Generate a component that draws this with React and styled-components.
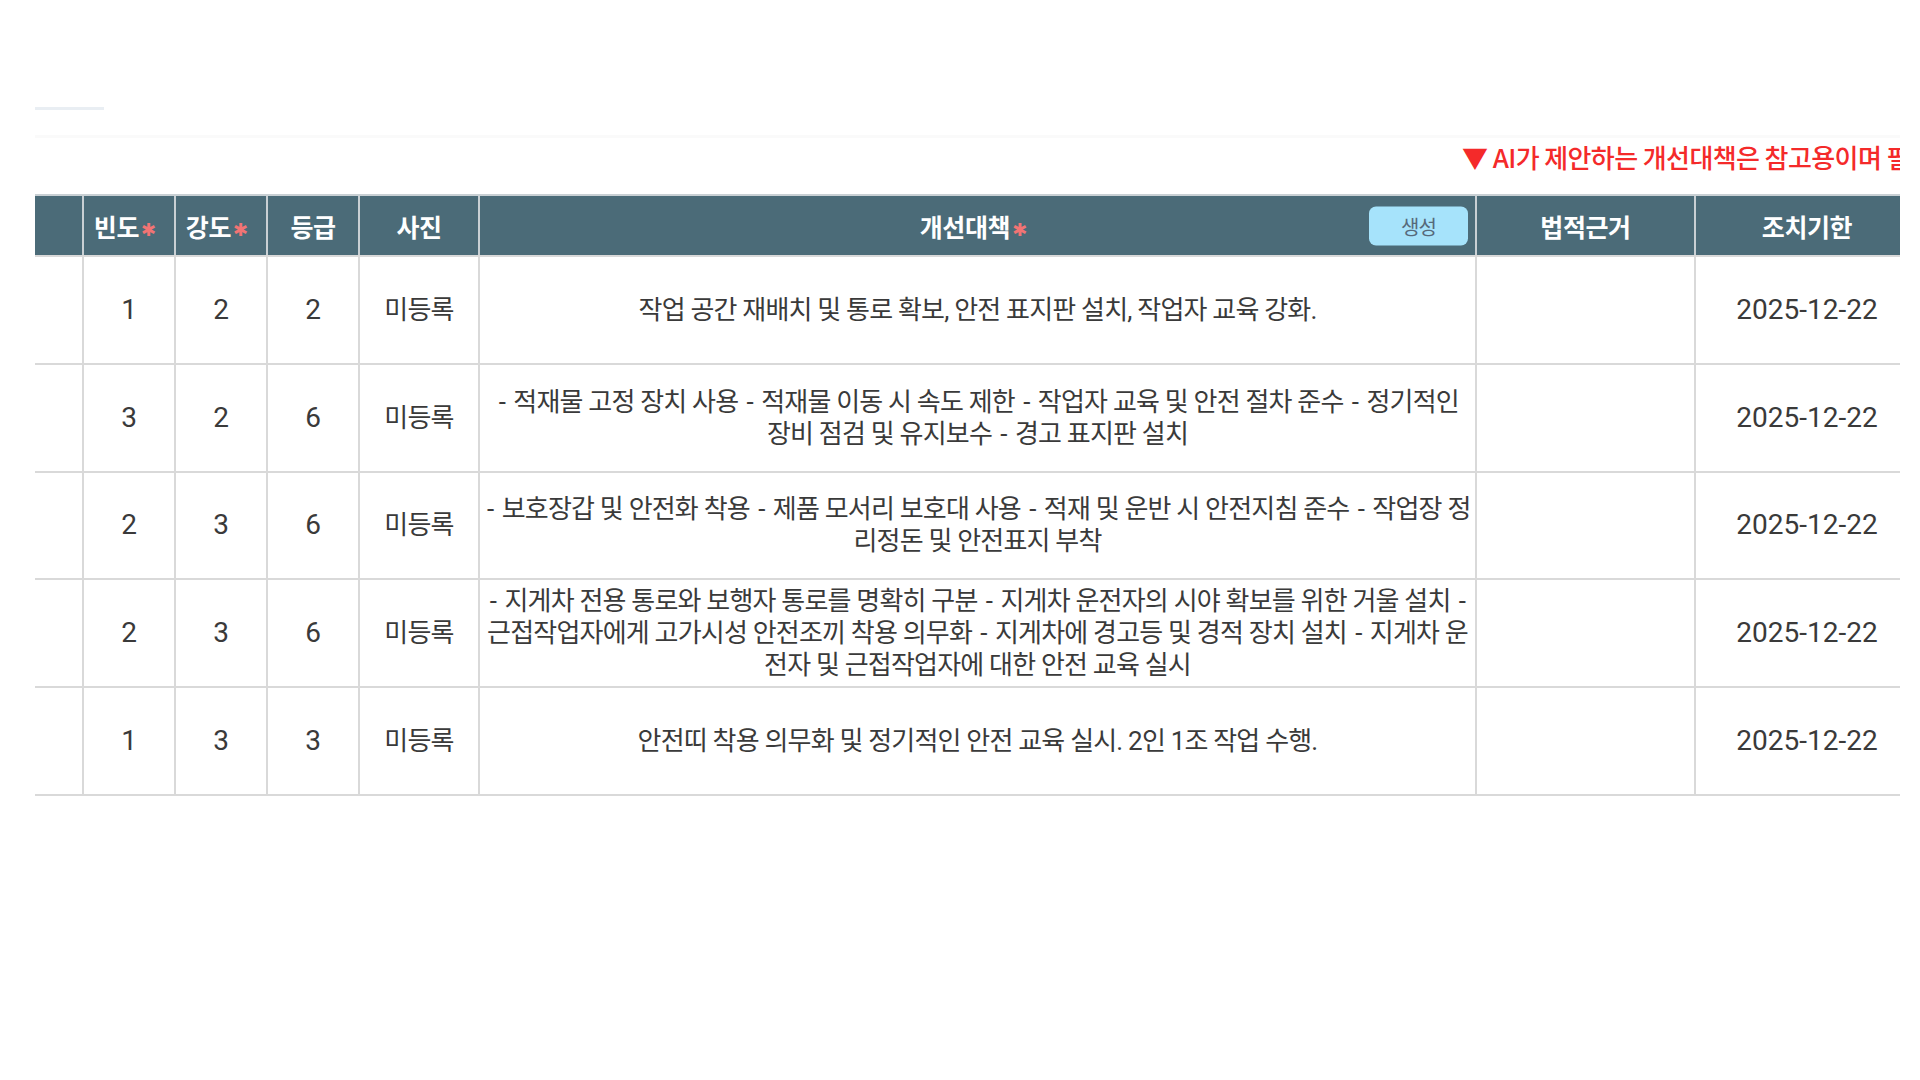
import React from 'react';
import styled, { createGlobalStyle } from 'styled-components';

const GlobalStyle = createGlobalStyle`
	html,
	body {
		margin: 0;
		padding: 0;
		background: #ffffff;
		overflow: hidden;
	}

	body {
		font-family: Roboto, 'Noto Sans CJK KR', sans-serif;
		color: #333333;
	}
`;

// 표 컬럼
const columns = [
	{ key: 'no', label: '', width: 49 },
	{ key: 'freq', label: '빈도', width: 92, required: true },
	{ key: 'sev', label: '강도', width: 92, required: true },
	{ key: 'grade', label: '등급', width: 92 },
	{ key: 'photo', label: '사진', width: 120 },
	{ key: 'measure', label: '개선대책', width: 997, required: true, action: '생성' },
	{ key: 'law', label: '법적근거', width: 219 },
	{ key: 'due', label: '조치기한', width: 224 },
];

// 개선대책은 화면에 보이는 줄 단위로 나눠둠
const rows = [
	{
		freq: 1,
		sev: 2,
		grade: 2,
		photo: '미등록',
		measure: ['작업 공간 재배치 및 통로 확보, 안전 표지판 설치, 작업자 교육 강화.'],
		law: '',
		due: '2025-12-22',
	},
	{
		freq: 3,
		sev: 2,
		grade: 6,
		photo: '미등록',
		measure: [
			'- 적재물 고정 장치 사용 - 적재물 이동 시 속도 제한 - 작업자 교육 및 안전 절차 준수 - 정기적인',
			'장비 점검 및 유지보수 - 경고 표지판 설치',
		],
		law: '',
		due: '2025-12-22',
	},
	{
		freq: 2,
		sev: 3,
		grade: 6,
		photo: '미등록',
		measure: [
			'- 보호장갑 및 안전화 착용 - 제품 모서리 보호대 사용 - 적재 및 운반 시 안전지침 준수 - 작업장 정',
			'리정돈 및 안전표지 부착',
		],
		law: '',
		due: '2025-12-22',
	},
	{
		freq: 2,
		sev: 3,
		grade: 6,
		photo: '미등록',
		measure: [
			'- 지게차 전용 통로와 보행자 통로를 명확히 구분 - 지게차 운전자의 시야 확보를 위한 거울 설치 -',
			'근접작업자에게 고가시성 안전조끼 착용 의무화 - 지게차에 경고등 및 경적 장치 설치 - 지게차 운',
			'전자 및 근접작업자에 대한 안전 교육 실시',
		],
		law: '',
		due: '2025-12-22',
	},
	{
		freq: 1,
		sev: 3,
		grade: 3,
		photo: '미등록',
		measure: ['안전띠 착용 의무화 및 정기적인 안전 교육 실시. 2인 1조 작업 수행.'],
		law: '',
		due: '2025-12-22',
	},
];

const Page = styled.main`
	width: 1865px;
	margin-left: 35px;
	padding-top: 107px;
	overflow: hidden;
`;

const TabLine = styled.div`
	width: 69px;
	height: 3px;
	background: #e9eef3;
`;

const Divider = styled.div`
	height: 3px;
	margin-top: 25px;
	background: #fafafa;
`;

const Notice = styled.p`
	margin: 4px 0 22px;
	padding-left: 1427px;
	white-space: nowrap;
	font-family: 'Noto Sans CJK KR', sans-serif;
	font-size: 26px;
	font-weight: 500;
	line-height: 30px;
	letter-spacing: -0.6px;
	color: #f42a2a;
`;

const Table = styled.table`
	width: 1885px;
	table-layout: fixed;
	border-collapse: separate;
	border-spacing: 0;
`;

const HeadCell = styled.th`
	position: relative;
	height: 59px;
	padding: 0;
	background: #4b6b78;
	border-top: 2px solid #c9d0d4;
	border-right: 2px solid #c9d0d4;
	color: #ffffff;
	font-family: 'Noto Sans CJK KR', sans-serif;
	font-size: 25px;
	font-weight: 700;
	letter-spacing: -0.4px;
	text-align: center;
	white-space: nowrap;
`;

const Required = styled.span`
	margin: 0 8px 0 2px;
	font-family: 'DejaVu Sans', sans-serif;
	font-size: 18px;
	font-weight: 400;
	letter-spacing: 0;
	vertical-align: 1px;
	color: #f27474;
`;

const MakeButton = styled.button`
	position: absolute;
	top: 50%;
	right: 7px;
	width: 99px;
	height: 39px;
	transform: translateY(-50%);
	border: none;
	border-radius: 7px;
	background: #a6e3fb;
	color: #56697a;
	font-family: 'Noto Sans CJK KR', sans-serif;
	font-size: 20px;
	letter-spacing: -0.8px;
	cursor: pointer;
`;

const Cell = styled.td`
	height: 105.8px;
	padding: 0 ${(p) => (p.$text ? '4px' : '0')};
	border-top: ${(p) => (p.$first ? '2px solid #d9d9d9' : 'none')};
	border-right: 2px solid #d9d9d9;
	border-bottom: 2px solid #d9d9d9;
	text-align: center;
	vertical-align: middle;
	color: #3a3a3a;
	font-size: ${(p) => (p.$text ? '26px' : '28px')};
	line-height: 32px;
	letter-spacing: ${(p) => (p.$text ? '-0.8px' : '0')};
`;

const Line = styled.span`
	display: block;
	white-space: nowrap;
`;

// 항목 구분용 하이픈은 앞뒤 간격이 조금 더 넓음
const Dash = styled.span`
	padding: 0 2.6px;
`;

const renderLine = (line) =>
	line.split('-').map((part, k) => (
		<React.Fragment key={k}>
			{k > 0 && <Dash>-</Dash>}
			{part}
		</React.Fragment>
	));

const App = () => {
	return (
		<>
			<GlobalStyle />
			<Page>
				<TabLine />
				<Divider />
				<Notice>▼ AI가 제안하는 개선대책은 참고용이며 필요시 수정하여 사용하시기 바랍니다.</Notice>
				<Table>
					<colgroup>
						{columns.map((col) => (
							<col key={col.key} style={{ width: col.width }} />
						))}
					</colgroup>
					<thead>
						<tr>
							{columns.map((col) => (
								<HeadCell key={col.key}>
									{col.label}
									{col.required && <Required>✱</Required>}
									{col.action && <MakeButton type="button">{col.action}</MakeButton>}
								</HeadCell>
							))}
						</tr>
					</thead>
					<tbody>
						{rows.map((row, i) => (
							<tr key={i}>
								<Cell $first={i === 0} />
								<Cell $first={i === 0}>{row.freq}</Cell>
								<Cell $first={i === 0}>{row.sev}</Cell>
								<Cell $first={i === 0}>{row.grade}</Cell>
								<Cell $first={i === 0} $text>
									{row.photo}
								</Cell>
								<Cell $first={i === 0} $text>
									{row.measure.map((line, j) => (
										<Line key={j}>{renderLine(line)}</Line>
									))}
								</Cell>
								<Cell $first={i === 0} $text>
									{row.law}
								</Cell>
								<Cell $first={i === 0}>{row.due}</Cell>
							</tr>
						))}
					</tbody>
				</Table>
			</Page>
		</>
	);
};

export default App;
